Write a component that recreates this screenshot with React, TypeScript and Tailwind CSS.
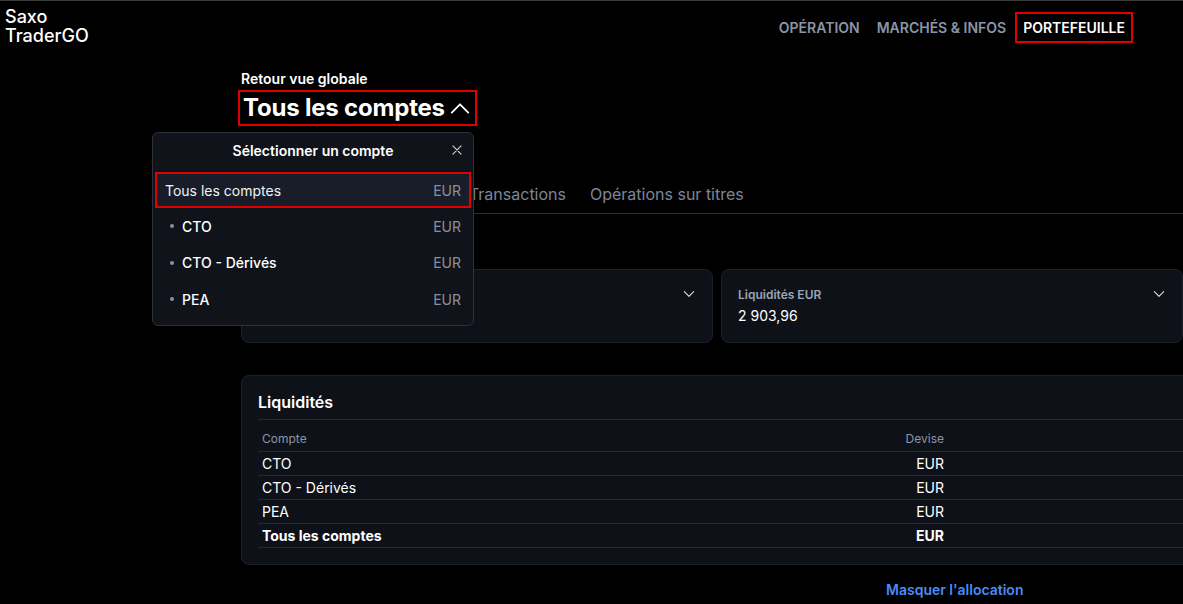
import React from 'react';

const accounts = [
  { name: 'CTO', currency: 'EUR' },
  { name: 'CTO - Dérivés', currency: 'EUR' },
  { name: 'PEA', currency: 'EUR' },
];

const ChevronDown = ({ className = '' }: { className?: string }) => (
  <svg className={className} width="14" height="14" viewBox="0 0 24 24" fill="none" stroke="currentColor" strokeWidth={2} strokeLinecap="round" strokeLinejoin="round">
    <path d="M4 8l8 8 8-8" />
  </svg>
);

const AccountDropdown: React.FC = () => (
  <div className="absolute left-[-89px] top-[62px] w-[322px] rounded-md border border-[#2c313d] bg-[#10131a] pb-[7px] z-10">
    <div className="relative flex h-[34px] items-center justify-center">
      <span className="text-[14px] font-semibold text-white">Sélectionner un compte</span>
      <svg className="absolute right-[9px] top-[10px] text-[#d6d9de]" width="14" height="14" viewBox="0 0 24 24" fill="none" stroke="currentColor" strokeWidth={1.8} strokeLinecap="round">
        <path d="M5 5l14 14M19 5L5 19" />
      </svg>
    </div>
    <div className="mx-[2px] mt-[5px] flex h-[36px] items-center justify-between border-2 border-[#e00000] bg-[#181d29] px-[8px]">
      <span className="text-[14px] text-[#f1f2f4]">Tous les comptes</span>
      <span className="text-[14px] text-[#8b909a]">EUR</span>
    </div>
    {accounts.map((a) => (
      <div key={a.name} className="flex h-[36.5px] items-center justify-between pl-[17px] pr-[12px]">
        <span className="flex items-center gap-[8px] text-[14px] font-medium text-white">
          <span className="h-[4px] w-[4px] rounded-full bg-[#8b909a]" />
          {a.name}
        </span>
        <span className="text-[14px] text-[#8b909a]">{a.currency}</span>
      </div>
    ))}
  </div>
);

export default function App() {
  return (
    <div className="h-[604px] w-[1183px] overflow-hidden border-t border-[#3c3c3c] bg-black" style={{ fontFamily: 'Inter, "Noto Sans", sans-serif' }}>
      <header className="flex items-start justify-between pr-[50px]">
        <div className="pl-[5px] pt-[6px] text-[18px] font-medium leading-[19px] text-white">
          <div>Saxo</div>
          <div>TraderGO</div>
        </div>
        <nav className="mt-[11px] flex items-center gap-[17px] text-[14px] font-semibold uppercase">
          <a className="text-[#8a95a8]">Opération</a>
          <a className="text-[#8a95a8]">Marchés &amp; Infos</a>
          <a className="-ml-[8px] flex h-[31px] items-center border-2 border-[#e00000] px-[6px] text-white">Portefeuille</a>
        </nav>
      </header>

      <main className="pl-[241px] pt-[25px]">
        <div className="relative">
          <div className="text-[14px] font-semibold leading-[17px] text-white">Retour vue globale</div>
          <div className="-ml-[3px] mt-[3px] inline-flex h-[36px] items-center gap-[4px] border-2 border-[#e00000] pl-[3px] pr-[4px]">
            <span className="text-[24px] font-bold leading-none tracking-[-0.2px] text-white">Tous les comptes</span>
            <svg width="22" height="22" viewBox="0 0 24 24" fill="none" stroke="white" strokeWidth={2} strokeLinecap="round" strokeLinejoin="round">
              <path d="M3 17l9-9 9 9" />
            </svg>
          </div>
          <AccountDropdown />
        </div>

        <div className="mt-[56px] flex gap-[24px] border-b border-[#2a2f3a] text-[16px] text-[#7d8697]">
          <button className="pb-[7px] text-white">Vue d'ensemble</button>
          <button className="pb-[7px]">Positions</button>
          <button className="-ml-[11px] pb-[7px]">Transactions</button>
          <button className="pb-[7px]">Opérations sur titres</button>
        </div>

        <div className="mt-[55px] flex gap-[8px]">
          <div className="flex h-[74px] w-[472px] items-start justify-end rounded-lg border border-[#1c212c] bg-[#0f1118] px-[16px] pt-[16px]">
            <ChevronDown className="mt-[1px] text-[#d6d9de]" />
          </div>
          <div className="flex h-[74px] w-[462px] items-start justify-between rounded-lg border border-[#1c212c] bg-[#0f1118] px-[16px] pt-[16px]">
            <div>
              <div className="text-[12px] font-semibold text-[#9aa6b8]">Liquidités EUR</div>
              <div className="mt-[1px] text-[14px] text-white">2 903,96</div>
            </div>
            <ChevronDown className="mt-[1px] text-[#d6d9de]" />
          </div>
        </div>

        <section className="mt-[32px] w-[950px] rounded-lg border border-[#1c212c] bg-[#0f1118] pb-[16px] pl-[16px] pt-[14px]">
          <h2 className="pb-[5px] text-[16px] font-semibold text-white">Liquidités</h2>
          <table className="w-full border-t border-[#262b36] text-[14px]">
            <thead>
              <tr className="h-[32px] border-b border-[#262b36] text-[12px] text-[#8b95a5]">
                <th className="w-[606px] pl-[4px] pt-[6px] text-left font-normal">Compte</th>
                <th className="w-[80px] pt-[6px] text-right font-normal">Devise</th>
                <th />
              </tr>
            </thead>
            <tbody className="text-white">
              {accounts.map((a) => (
                <tr key={a.name} className="h-[24px] border-b border-[#262b36]">
                  <td className="pl-[4px]">{a.name}</td>
                  <td className="text-right">{a.currency}</td>
                  <td />
                </tr>
              ))}
              <tr className="h-[24px] border-b border-[#262b36] font-bold">
                <td className="pl-[4px]">Tous les comptes</td>
                <td className="text-right">EUR</td>
                <td />
              </tr>
            </tbody>
          </table>
        </section>

        <div className="mt-[14px] pl-[645px] text-[14px] font-semibold text-[#4b8bf5]">Masquer l'allocation</div>
      </main>
    </div>
  );
}
